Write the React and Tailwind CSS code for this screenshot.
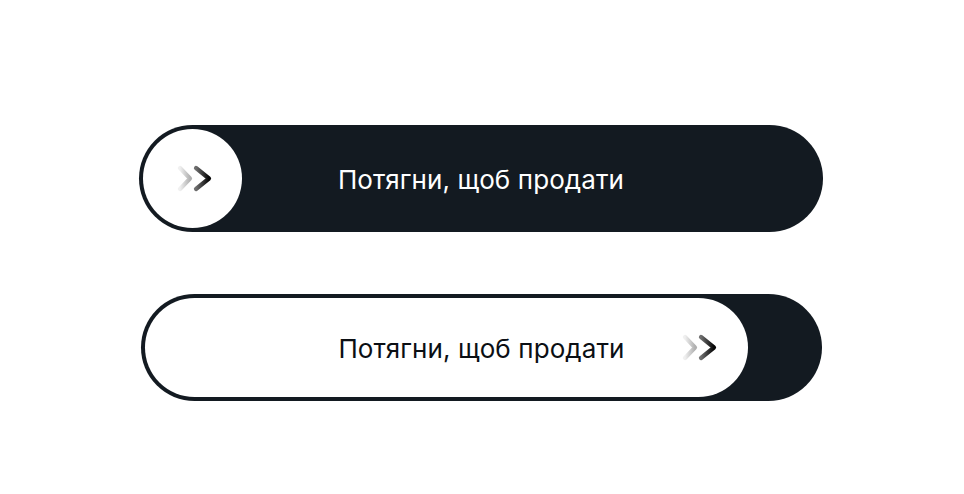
function Chevrons() {
  return (
    <svg width="36" height="27" viewBox="0 0 36 27" fill="none">
      <defs>
        <linearGradient id="chevLight" x1="0" y1="0" x2="1" y2="0">
          <stop offset="0%" stopColor="#f0f0f0" />
          <stop offset="100%" stopColor="#b0b0b0" />
        </linearGradient>
        <linearGradient id="chevDark" x1="0" y1="0" x2="1" y2="0">
          <stop offset="0%" stopColor="#6f6f6f" />
          <stop offset="100%" stopColor="#050505" />
        </linearGradient>
      </defs>
      <polyline
        points="3,3 13,13.5 3,24"
        stroke="url(#chevLight)"
        strokeWidth="4.2"
        strokeLinecap="round"
        strokeLinejoin="round"
      />
      <polyline
        points="19,3 32,13.5 19,24"
        stroke="url(#chevDark)"
        strokeWidth="4.2"
        strokeLinecap="round"
        strokeLinejoin="round"
      />
    </svg>
  );
}

export default function App() {
  return (
    <div
      className="min-h-screen w-[964px] bg-white flex flex-col pt-[125px] gap-[62px]"
      style={{ fontFamily: "Inter, 'Noto Sans', sans-serif" }}
    >
      {/* Idle slider */}
      <div className="relative ml-[139px] w-[684px] h-[107px] rounded-full bg-[#131a21] flex items-center justify-center">
        <div className="absolute left-[4px] top-[4px] w-[99px] h-[99px] rounded-full bg-white flex items-center justify-center pl-[5px]">
          <Chevrons />
        </div>
        <span className="text-white text-[26px] tracking-[0.1px] pt-[2px]">Потягни, щоб продати</span>
      </div>

      {/* Dragged slider */}
      <div className="relative ml-[141px] w-[681px] h-[107px] rounded-full bg-[#131a21] flex items-center justify-center">
        <div className="absolute left-[4px] top-[4px] w-[603px] h-[99px] rounded-full bg-white flex items-center justify-end pr-[30px]">
          <Chevrons />
        </div>
        <span className="relative text-[#0b0f14] text-[26px] tracking-[0.1px] pt-[2px]">Потягни, щоб продати</span>
      </div>
    </div>
  );
}
